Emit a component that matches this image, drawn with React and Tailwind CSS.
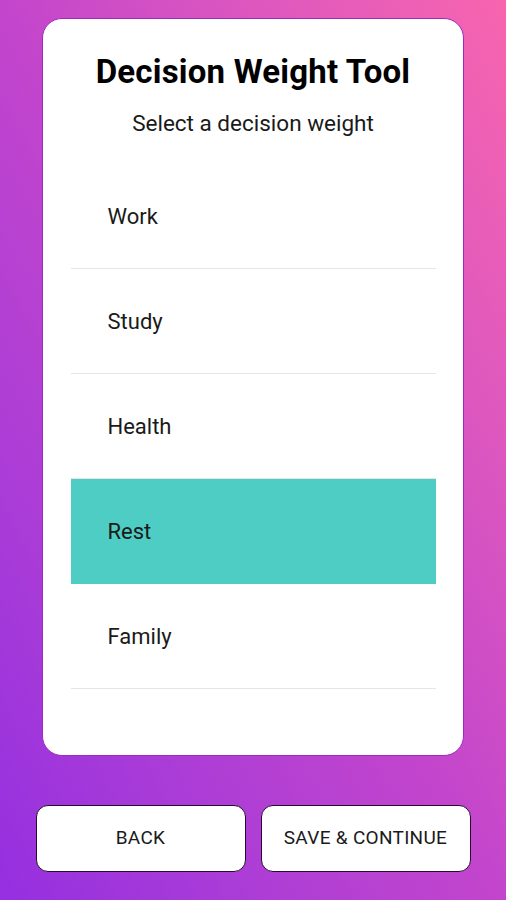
import React, { useState } from 'react';

const options = ['Work', 'Study', 'Health', 'Rest', 'Family'];

const App = () => {
  const [selected, setSelected] = useState('Rest');

  return (
    <div
      className="w-[506px] h-[900px] flex flex-col items-center bg-gradient-to-tr from-[#952fe0] via-[#c345cc] to-[#f865ae]"
      style={{ fontFamily: 'Roboto, "Liberation Sans", sans-serif' }}
    >
      <div className="mt-[18px] w-[422px] h-[738px] bg-white rounded-[20px] border border-[#9a2cc0] flex flex-col items-center">
        <h1 className="mt-[33px] text-[33px] leading-[40px] font-bold text-black tracking-[0.2px]">
          Decision Weight Tool
        </h1>
        <p className="mt-[17px] text-[22.5px] leading-[28px] text-[#1a1a1a]">Select a decision weight</p>

        <div className="mt-[27px] w-[365px] flex flex-col">
          {options.map((opt) => (
            <button
              key={opt}
              onClick={() => setSelected(opt)}
              className={`h-[105px] pl-[37px] flex items-center text-left text-[22px] text-[#1a1a1a] border-b ${
                selected === opt ? 'bg-[#4ecdc4] border-[#4ecdc4]' : 'bg-white border-[#e6e6e6]'
              }`}
            >
              {opt}
            </button>
          ))}
        </div>
      </div>

      <div className="mt-[49px] w-[435px] flex gap-[15px]">
        <button className="w-[210px] h-[67px] bg-white border border-[#2a0a30] rounded-[12px] text-[19px] font-normal text-[#1a1a1a] tracking-[0.3px]">
          BACK
        </button>
        <button className="w-[210px] h-[67px] bg-white border border-[#2a0a30] rounded-[12px] text-[19px] font-normal text-[#1a1a1a] tracking-[0.3px]">
          SAVE &amp; CONTINUE
        </button>
      </div>
    </div>
  );
};

export default App;
